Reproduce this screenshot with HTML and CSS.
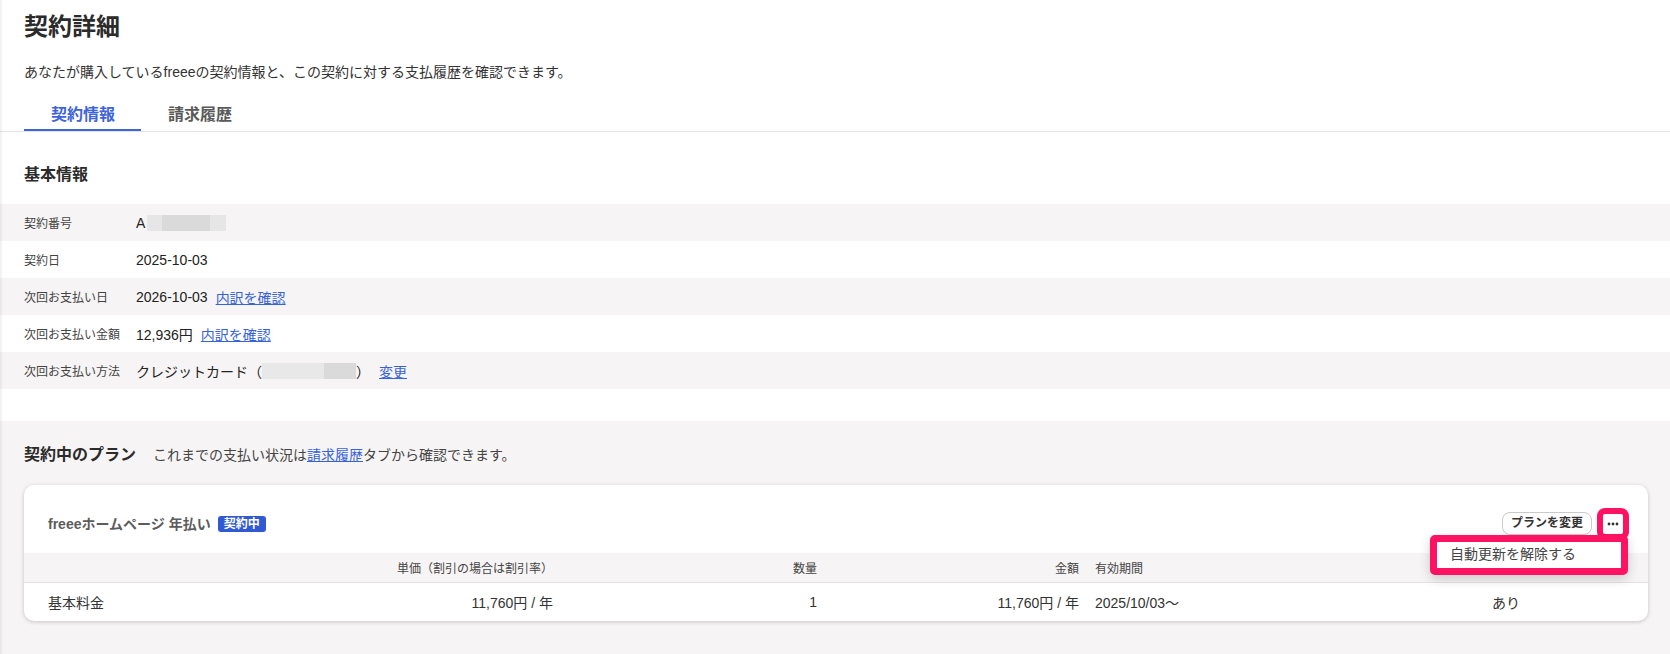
FILE: index.html
```html
<!DOCTYPE html>
<html lang="ja">

<head>
    <meta charset="UTF-8">
    <title>契約詳細</title>
    <link rel="stylesheet" href="styles.css">
</head>

<body>
    <div class="page">
        <header class="page-head">
            <div class="head-inner">
                <h1 class="page-title">契約詳細</h1>
                <p class="page-lead">あなたが購入しているfreeeの契約情報と、この契約に対する支払履歴を確認できます。</p>
            </div>
            <nav class="tabs">
                <a href="#" class="tab is-active">契約情報</a>
                <a href="#" class="tab">請求履歴</a>
            </nav>
        </header>

        <section class="basic">
            <h2 class="section-title">基本情報</h2>
            <dl class="info-list">
                <div class="info-row">
                    <dt>契約番号</dt>
                    <dd>A<span class="mask mask-id"></span></dd>
                </div>
                <div class="info-row">
                    <dt>契約日</dt>
                    <dd>2025-10-03</dd>
                </div>
                <div class="info-row">
                    <dt>次回お支払い日</dt>
                    <dd>2026-10-03<a href="#" class="link gap">内訳を確認</a></dd>
                </div>
                <div class="info-row">
                    <dt>次回お支払い金額</dt>
                    <dd>12,936円<a href="#" class="link gap">内訳を確認</a></dd>
                </div>
                <div class="info-row">
                    <dt>次回お支払い方法</dt>
                    <dd>クレジットカード（<span class="mask mask-card"></span>）<a href="#" class="link gap-wide">変更</a></dd>
                </div>
            </dl>
        </section>

        <section class="plans">
            <div class="plans-head">
                <h2 class="section-title">契約中のプラン</h2>
                <p class="plans-note">これまでの支払い状況は<a href="#" class="link">請求履歴</a>タブから確認できます。</p>
            </div>

            <div class="plan-card">
                <div class="plan-head">
                    <div class="plan-name">freeeホームページ 年払い<span class="badge">契約中</span></div>
                    <div class="plan-actions">
                        <button class="btn">プランを変更</button>
                        <button class="btn-more" aria-label="その他">
                            <svg width="20" height="20" viewBox="0 0 20 20">
                                <circle cx="6" cy="10" r="1.4" fill="#333"/>
                                <circle cx="10" cy="10" r="1.4" fill="#333"/>
                                <circle cx="14" cy="10" r="1.4" fill="#333"/>
                            </svg>
                        </button>
                    </div>
                </div>

                <table class="plan-table">
                    <colgroup>
                        <col class="c-name">
                        <col class="c-price">
                        <col class="c-qty">
                        <col class="c-amount">
                        <col class="c-term">
                        <col class="c-renew">
                    </colgroup>
                    <thead>
                        <tr>
                            <th></th>
                            <th class="num">単価（割引の場合は割引率）</th>
                            <th class="num">数量</th>
                            <th class="num">金額</th>
                            <th>有効期間</th>
                            <th class="center">自動更新</th>
                        </tr>
                    </thead>
                    <tbody>
                        <tr>
                            <td>基本料金</td>
                            <td class="num">11,760円 / 年</td>
                            <td class="num">1</td>
                            <td class="num">11,760円 / 年</td>
                            <td>2025/10/03〜</td>
                            <td class="center">あり</td>
                        </tr>
                    </tbody>
                </table>

                <div class="menu">
                    <button class="menu-item">自動更新を解除する</button>
                </div>
            </div>
        </section>
    </div>
</body>

</html>
```

FILE: styles.css
```css
body {
    font-family: "Liberation Sans", Arial, "Noto Sans CJK JP", sans-serif;
    margin: 0;
    padding: 0;
    background: #fff;
    color: #333;
}

.page {
    position: relative;
    display: flex;
    flex-direction: column;
    min-height: 100vh;
}

/* thin shade along the left edge, from the side menu */
.page::after {
    content: "";
    position: absolute;
    top: 0;
    bottom: 0;
    left: 0;
    width: 3px;
    background: linear-gradient(90deg, rgba(0, 0, 0, 0.07), rgba(0, 0, 0, 0));
    pointer-events: none;
}

a {
    color: #3763d8;
}

/* header */

.page-head {
    padding-top: 9px;
}

.head-inner {
    padding: 0 24px;
}

.page-title {
    margin: 0;
    font-size: 24px;
    line-height: 36px;
    font-weight: 700;
    color: #2b2b2b;
}

.page-lead {
    margin: 16px 0 0;
    font-size: 14px;
    line-height: 22px;
    color: #333;
}

.tabs {
    display: flex;
    margin-top: 12px;
    padding-left: 24px;
    border-bottom: 1px solid #e5e5e5;
}

.tab {
    display: block;
    padding: 8px 26px 2px 27px;
    font-size: 16px;
    line-height: 24px;
    font-weight: 700;
    color: #5a5a5a;
    text-decoration: none;
    border-bottom: 2px solid transparent;
}

.tab.is-active {
    color: #3d63dd;
    border-bottom-color: #3d63dd;
}

/* basic info */

.basic {
    padding: 31px 0 32px;
}

.section-title {
    margin: 0;
    font-size: 16px;
    line-height: 24px;
    font-weight: 700;
    color: #2b2b2b;
}

.basic .section-title {
    padding: 0 24px;
    margin-bottom: 17px;
}

.info-list {
    margin: 0;
}

.info-row {
    display: flex;
    align-items: center;
    height: 37px;
    padding: 0 24px;
}

.info-row:nth-child(odd) {
    background: #f6f4f4;
}

.info-row dt {
    width: 112px;
    font-size: 12px;
    color: #444;
}

.info-row dd {
    margin: 0;
    display: flex;
    align-items: center;
    font-size: 14px;
    color: #222;
}

.gap {
    margin-left: 8px;
}

.gap-wide {
    margin-left: 9px;
}

.mask {
    display: inline-block;
    height: 16px;
}

.mask-id {
    width: 79px;
    margin-left: 2px;
    background: linear-gradient(90deg, #e6e6e6 0 15px, #dadada 15px 63px, #e6e6e6 63px);
}

.mask-card {
    width: 94px;
    background: linear-gradient(90deg, #e8e8e8 0 62px, #dadada 62px);
}

/* plans */

.plans {
    flex: 1;
    background: #f6f4f4;
    padding: 22px 0 34px;
}

.plans-head {
    display: flex;
    align-items: center;
    gap: 17px;
    padding: 0 24px;
}

.plans-note {
    margin: 0;
    font-size: 14px;
    line-height: 24px;
    color: #444;
}

.plan-card {
    position: relative;
    margin: 18px 22px 0 24px;
    background: #fff;
    border-radius: 10px;
    box-shadow: 0 1px 4px rgba(0, 0, 0, 0.2);
}

.plan-head {
    display: flex;
    align-items: center;
    justify-content: space-between;
    padding: 27px 25px 18px 24px;
}

.plan-name {
    display: flex;
    align-items: center;
    font-size: 14px;
    line-height: 22px;
    font-weight: 700;
    color: #5c5c5c;
}

.badge {
    margin-left: 7px;
    padding: 0 6px;
    height: 16px;
    line-height: 16px;
    font-size: 12px;
    font-weight: 700;
    color: #fff;
    background: #3159d1;
    border-radius: 3px;
}

.plan-actions {
    display: flex;
    align-items: center;
    gap: 11px;
}

.btn {
    height: 23px;
    padding: 0 8px;
    font-family: inherit;
    font-size: 12px;
    font-weight: 700;
    line-height: 21px;
    color: #333;
    background: #fff;
    border: 1px solid #cacaca;
    border-radius: 8px;
}

.btn-more {
    display: block;
    width: 20px;
    height: 20px;
    padding: 0;
    background: #fff;
    border: none;
    border-radius: 2px;
    outline: 6px solid #fd1362;
}

.btn-more svg {
    display: block;
}

.plan-table {
    width: 100%;
    border-collapse: collapse;
    table-layout: fixed;
}

.c-name { width: 201px; }
.c-price { width: 336px; }
.c-qty { width: 264px; }
.c-amount { width: 262px; }
.c-term { width: 293px; }

.plan-table th,
.plan-table td {
    padding: 0 8px;
    text-align: left;
    white-space: nowrap;
}

.plan-table th:first-child,
.plan-table td:first-child {
    padding-left: 24px;
}

.plan-table th:last-child,
.plan-table td:last-child {
    padding-right: 24px;
}

.plan-table th {
    height: 29px;
    font-size: 12px;
    font-weight: 400;
    color: #444;
    background: #f6f4f4;
    border-bottom: 1px solid #e3e3e3;
}

.plan-table td {
    height: 38px;
    font-size: 14px;
    color: #333;
}

.plan-table .num {
    text-align: right;
}

.plan-table .center {
    text-align: center;
}

/* open "..." menu */

.menu {
    position: absolute;
    top: 50px;
    right: 20px;
    width: 184px;
    background: #fff;
    border: 7px solid #fd1362;
    border-radius: 5px;
    box-shadow: 0 4px 12px rgba(0, 0, 0, 0.18);
}

.menu-item {
    display: block;
    width: 100%;
    height: 26px;
    padding: 0 0 2px 13px;
    font-family: inherit;
    font-size: 14px;
    line-height: 24px;
    text-align: left;
    color: #444;
    background: #fff;
    border: none;
}
```
